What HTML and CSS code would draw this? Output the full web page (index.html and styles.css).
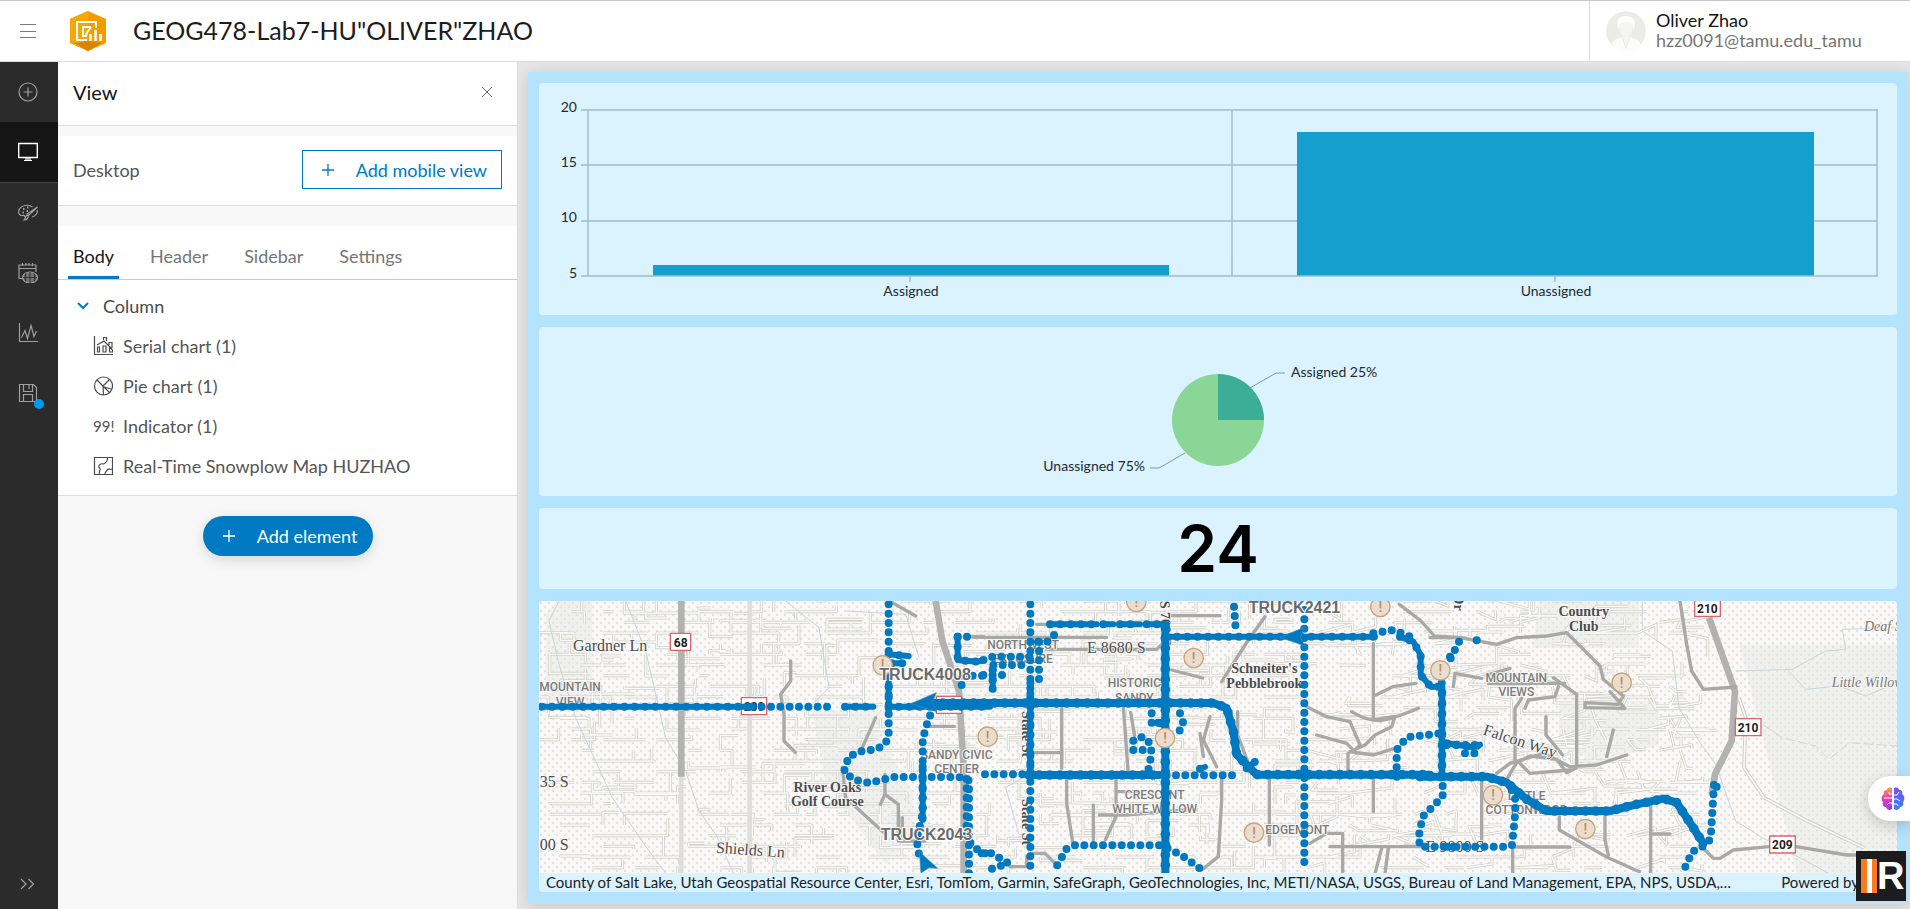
FILE: index.html
```html
<!DOCTYPE html>
<html lang="en">
<head>
<meta charset="utf-8">
<title>GEOG478-Lab7 dashboard</title>
<link rel="stylesheet" href="styles.css">
</head>
<body>
<header class="topbar">
  <button class="menu-btn" aria-label="Menu"><svg width="16" height="16" viewBox="0 0 16 16"><path d="M0 1.500h16M0 8.500h16M0 14.500h16" stroke="#7a7a7a" fill="none"/></svg></button>
  <svg class="app-logo" width="36" height="40" viewBox="0 0 36 40">
    <path d="M18 0 36 8v24L18 40 0 32V8z" fill="#f39c00"/><path d="M18 0 0 8v24l18 8z" fill="#f7a800"/><path d="m18 30 14 2-14 8-14-8z" fill="#dc8400"/>
    <path d="M26 17v-6H7v18h10M21 16h-8v9h3c0-5 3-5 5-9" fill="none" stroke="#fff" stroke-width="2"/><path d="M20.500 23v7M25.500 19v11M30.500 23v7" stroke="#fff" stroke-width="2.500"/>
  </svg>
  <h1 class="title">GEOG478-Lab7-HU"OLIVER"ZHAO</h1>
  <div class="user">
    <svg width="40" height="40" viewBox="0 0 40 40"><defs><clipPath id="av"><circle cx="20" cy="20" r="20"/></clipPath></defs><g clip-path="url(#av)"><circle cx="20" cy="20" r="20" fill="#ebebe9"/><path d="M6 40V32c1-3 6-5 10-6h8c4 1 9 3 10 6v8z" fill="#fbfbfa"/><path d="M12 17C10 8 14 5 20 5s10 3 8 12z" fill="#fff"/><path d="M13 14c2-4 12-4 14 0 0 6-2 11-7 12-5-1-7-6-7-12z" fill="#f5f5f4"/><path d="m16 26 4 11 4-11" fill="#f5f5f4" stroke="#ebebe9"/></g></svg>
    <div class="user-text"><strong>Oliver Zhao</strong><span>hzz0091@tamu.edu_tamu</span></div>
  </div>
</header>
<div class="workspace">
  <nav class="rail" aria-label="Tools">
    <button aria-label="Add"><svg width="20" height="20" viewBox="0 0 20 20"><circle cx="10" cy="10" r="9"/><path d="M10 5.500v9M5.500 10h9"/></svg></button>
    <button class="active" aria-label="View"><svg width="20" height="20" viewBox="0 0 20 20"><path d="M.7 1.500h18.600v14H.7z" stroke-width="1.400"/><path d="M8 16v2.500M12 16v2.500M6 18.500h8M10 16v2"/></svg></button>
    <button aria-label="Theme"><svg width="20" height="20" viewBox="0 0 20 20"><path d="M14.500 4C11 1 3 2 1 7c-1.500 4 1.500 6 3.500 5.500S7 13 6.500 14M14 14c4-1 6-4 5-7"/><path d="m19.500 4-9 8.500-1.500-1.500zM10 12.500c1 2-1 4.500-4 4.500 1.500-1 1-3 2.500-4.500z"/><path d="M5 6h1.500M9 4.500h1.500M4.500 9.500H6M8.500 8H10" stroke-width="1.800"/></svg></button>
    <button aria-label="Time zone"><svg width="20" height="20" viewBox="0 0 20 20"><path d="M4 15.500H1V2h17v7M1 5.500h17M4.500 0v3M8 0v2M11 0v2M14.500 0v3"/><ellipse cx="12" cy="14.500" rx="7.500" ry="5.500" fill="#777"/><path d="M5 14.500h14M12 9v11M8 10.500c-1.500 3-1.500 5 0 8M16 10.500c1.500 3 1.500 5 0 8" stroke="#333"/></svg></button>
    <button aria-label="Performance"><svg width="20" height="20" viewBox="0 0 20 20"><path d="M1.500 0v18.500H20M3.500 14.500l3.500-7 2.500 8 3.500-13 3 11 2.500-5.500"/></svg></button>
    <button class="save" aria-label="Save"><svg width="20" height="20" viewBox="0 0 20 20"><path d="M1.500 1.500h14l3 3v14h-17zM5.500 1.500v7h9v-7M5.500 18.500v-7h9v7M11 2v4"/></svg></button>
    <button class="expand" aria-label="Expand"><svg width="20" height="20" viewBox="0 0 20 20"><path d="m3 5 5 5-5 5M10.500 5l5 5-5 5"/></svg></button>
  </nav>
  <aside class="panel">
    <div class="panel-head"><h2>View</h2><button class="close" aria-label="Close"><svg width="12" height="12" viewBox="0 0 12 12"><path d="m1 1 10 10M11 1 1 11" stroke="#6a6a6a"/></svg></button></div>
    <div class="panel-mode"><span>Desktop</span><button class="mobile-btn"><svg width="12" height="12" viewBox="0 0 12 12"><path d="M6 0v12M0 6h12" stroke="#007ac2" stroke-width="1.300"/></svg>Add mobile view</button></div>
    <div class="tabs" role="tablist"><button role="tab" aria-selected="true" class="sel">Body</button><button role="tab">Header</button><button role="tab">Sidebar</button><button role="tab">Settings</button></div>
    <ul class="tree">
      <li class="parent"><svg width="12" height="12" viewBox="0 0 12 12"><path d="m1 3 5 5 5-5" fill="none" stroke="#007ac2" stroke-width="2"/></svg>Column</li>
      <li><svg width="20" height="20" viewBox="0 0 20 20"><path d="M1.500 0v18.500H20M4.500 16v-5h2v5zM10 16v-6h3v6zM16.500 16v-5l3 3v2zM4 9l7-4 8 8M10.500 4V1.500h3V5M16 9V6.500h3V12"/></svg>Serial chart (1)</li>
      <li><svg width="20" height="20" viewBox="0 0 20 20"><circle cx="10.500" cy="10" r="9"/><path d="m4 4 13 13M16.500 3.500 10 10l.5 9M11 11l7.500 2"/></svg>Pie chart (1)</li>
      <li><span class="nn">99!</span>Indicator (1)</li>
      <li><svg width="20" height="20" viewBox="0 0 20 20"><path d="M1.500 1.500h18v17h-18zM14.500 2c0 3-2 5-4 6-3-1-6 2-4 4 2 1-1 3 0 6M12 18c0-3 2-2 2-4 2-2 3 0 5-1"/></svg>Real-Time Snowplow Map HUZHAO</li>
    </ul>
    <button class="add-btn"><svg width="12" height="12" viewBox="0 0 12 12"><path d="M6 0v12M0 6h12" stroke="#fff" stroke-width="1.300"/></svg>Add element</button>
  </aside>
  <main class="stage">
    <div class="dash">
      <section class="card">
        <svg class="fill chart" viewBox="0 0 1358 232" role="img" aria-label="Serial chart">
          <g fill="#159fcf"><path d="M114 182h516v11H114zM758 49h517v144H758z"/></g>
          <path d="M42 27h1296M42 82h716M1275 82h63M42 138h716M1275 138h63M42 193h1296M49 27v166M693 27v166M1338 26v168M371 193v6M1016 193v6" fill="none" stroke="#a2bccb" stroke-width="1.500"/>
          <g text-anchor="end"><text x="38" y="29">20</text><text x="38" y="84">15</text><text x="38" y="139">10</text><text x="38" y="195">5</text></g>
          <g text-anchor="middle"><text x="372" y="213">Assigned</text><text x="1017" y="213">Unassigned</text></g>
        </svg>
      </section>
      <section class="card">
        <svg class="fill chart" viewBox="0 0 1358 169" role="img" aria-label="Pie chart">
          <circle cx="679" cy="93" r="46" fill="#8ad697"/><path d="M679 93V47a46 46 0 0 1 46 46z" fill="#3cae98"/>
          <path d="m711 61 26-15h9M646 126l-26 15h-9" fill="none" stroke="#86969e"/>
          <text x="752" y="50">Assigned 25%</text><text x="606" y="144" text-anchor="end">Unassigned 75%</text>
        </svg>
      </section>
      <section class="card indicator">24</section>
      <section class="card mapcard">
        <div class="mapview">
        <svg class="fill map" viewBox="0 0 4074 816" preserveAspectRatio="xMidYMid slice" role="img" aria-label="Snowplow map">
          <defs><pattern id="dots" width="24" height="24" patternUnits="userSpaceOnUse"><path d="M3 3h6v6H3zM15 15h6v6h-6z" fill="#e2e2e0"/></pattern></defs>
          <rect width="4074" height="816" fill="#f9f8f7"/>
          <path d="M20 40 60 0h100v300H20zM820 330h240v140l60 100 10 130-90 90-180-240zM3000 0h300v140h-320zM3060 300h300v130l-180 60-120-60zM3600 130h474v686h-300z" fill="#f0f0ee"/>
          <rect width="4074" height="816" fill="url(#dots)"/>
          <g id="streets"></g>
          <g class="creek"><path d="M60 0 30 60l30 130 50 160 110 240 110 160 60 80M260 0l60 150 60 260 60 100 40 120 50 70 60 130M740 0l100 80 30 180-60 60M920 30l180 10 40 130M1500 500l-100 60 40 140M3310 0v90l90 60 20 170 60 100 50 70 60 170 80 50 150 80 90 50M3590 210l170-5 100-55 60-5-10-60 164-5M3740 200l60 65 100-10 80 30 94-40"/><path d="M3640 350l90 60 100 25 40 40 60-50 144 10" stroke-dasharray="30 9"/></g>
          <g class="road soft"><path d="M427 0v816M632 0v816"/></g>
          <g class="road wide"><path d="M427 0v527M1190 0l20 120 50 150 14 230v316M3510 50l78 220-10 150-50 100-10 60"/></g>
          <path d="M3600 290l20 60-5 150 60 90 130 70 170 80" class="casing"/><path d="M3600 290l20 60-5 150 60 90 130 70 170 80" class="lane"/>
          <g class="road">
            <path d="M755 180v60l-30 40 10 60v80l34 34M1010 350l-40 90M910 500l10 90 120 110M1038 520v60l-14 30M1038 580l40 30v110h80M1060 5l70 40M1170 376h76M1275 107h60M1090 650v70"/>
            <g transform="translate(1323 -33)"><path d="M-20 142h400M170 103h380M200 178h330l20-20M575 77h145M575 240l93 24M855 80l-50 70-80 125M245 355v180M155 488h90M430 350l14 190M452 368l12 70M260 560v80l20 130M408 560v120l-32 70M340 645v110M358 675h80l210-18M410 605h60M690 380l-20 70 40 80M660 430l10 70M725 560v70l-10 170-50 40M773 365v70l30 80M868 570v195M980 350l60 30 70 15 30 70-20 20M1010 435l90 25 30 30M1104 490v60M1115 365c80 50 120 20 200-10M1180 160v230l60-10M1245 380l-10 30-50 25-30 30-45 20 70 10 80-25M1188 315l50-25 70-10M1258 43l65 50 40 45 80 5M1180 570v95M1050 770h420M990 760l50-30h48v120M1205 775l-20 75M1225 775l-10 75M155 790h40l30 30M90 830h50v-30"/></g>
            <g transform="translate(2703 -33)"><path d="M-30 143h90l110 20 60-20 90-5 60-10 100 100 10 40 60 50-15 25-100-5v15l120 2-45-50M40 290l5-40 80 15M145 280h230M210 235l-70 20M340 263l70 50v220l-30 15-30-40-80-10-40 20-30 50M170 550l40-30 100-30 80 40 80-5 90-30M240 520l30 30 120-10M355 290l-10 30-80 10-10 25M245 325l-20 30v160M318 380v55l50 60M520 420l-20 80M720 33l20 130 15 80 35 55 98-7M125 570v200M218 770v80M220 771h170M358 680v40l140 80 100 45M495 680v70l10 45M632 640v210M640 732h50M780 765l40 40h20l40-25 160-15 60 10 120 20h80"/></g>
          </g>
          <g class="serif">
            <text x="102" y="151">Gardner Ln</text><text x="2" y="558">35 S</text><text x="2" y="748">00 S</text><text transform="translate(530 755) rotate(4)">Shields Ln</text><text x="1644" y="157">E 8680 S</text><text x="2660" y="754">E 9800 S</text><text transform="translate(2830 400) rotate(18)">Falcon Way</text>
            <g class="bold"><text x="865" y="572" text-anchor="middle">River Oaks</text><text x="865" y="615" text-anchor="middle">Golf Course</text><text x="2176" y="216" text-anchor="middle">Schneiter's</text><text x="2176" y="260" text-anchor="middle">Pebblebrook</text><text x="3134" y="45" text-anchor="middle">Country</text><text x="3134" y="90" text-anchor="middle">Club</text></g>
            <g class="italic"><text x="3975" y="91">Deaf Smith</text><text x="3878" y="258">Little Willow</text></g>
            <g class="bold"><text transform="translate(1448 330) rotate(90)">State St</text><text transform="translate(1448 594) rotate(90)">State St</text><text transform="translate(1864 0) rotate(88)">S 700 E</text><text transform="translate(2744 -20) rotate(90)">Dr</text></g>
          </g>
          <g class="area" text-anchor="middle">
            <text x="93" y="271">MOUNTAIN</text><text x="93" y="314">VIEW</text><text x="1253" y="474">SANDY CIVIC</text><text x="1253" y="516">CENTER</text><text x="1452" y="143">NORTHWEST</text><text x="1452" y="185">EXPOSURE</text><text x="1786" y="259">HISTORIC</text><text x="1786" y="302">SANDY</text><text x="1847" y="593">CRESCENT</text><text x="1847" y="636">WHITE WILLOW</text><text x="2275" y="698">EDGEMONT</text><text x="2932" y="243">MOUNTAIN</text><text x="2932" y="285">VIEWS</text><text x="2963" y="596">LITTLE</text><text x="2963" y="639">COTTONWOOD</text>
          </g>
          <g class="shield" text-anchor="middle">
            <path d="M394 97h61v51h-61zM607 290h76v51h-76zM1192 286h76v51h-76zM3467-5h77v51h-77zM3589 353h77v51h-77zM3692 705h77v51h-77z"/>
            <text x="425" y="137">68</text><text x="645" y="330">209</text><text x="1230" y="326">209</text><text x="3505" y="36">210</text><text x="3627" y="393">210</text><text x="3730" y="745">209</text>
          </g>
          <g class="dotted">
            <path d="M640 317h230"/>
            <g transform="translate(-57 -33)"><path d="M1106 43v150M1106 260v180l-10 20-25 18-50 6-35 16-14 45 30 24 45 10 40-10 30-8h200l30 10v300M1340 567v180l40 40 25 5M1240 350l-22 60-10 40v220l-18 80 8 50M1395 553h160M1313 140h30M1330 257h70M1325 285h20"/></g>
            <g transform="translate(1323 -33)"><path d="M151 43v800M177 155v120M222 135l-20 20h-50M10 210l30-10h110M40 225h110M10 255h60M38 240v80M762 50l6 80M973 60v780M515 370v30h30M600 370l10 30-15 30M460 480v-30l30-10 20 20 5 30-10 50M460 480h50M560 556h220M285 766h260l60 30 70 50M285 766l-25 10-40 70M5 790l30 0 50 30-60 20M1180 130l60-10 50 20M1250 560v-80l30-38 100-12M1388 560v60l-60 60-12 60 4 30h110M1410 200v10"/></g>
            <g transform="translate(2703 -33)"><path d="M110 151l22 15M57 155l-30 60M215 600l12 30-3 60-8 75-8 5H0M822 585l-5 80-5 80-15 20-40 20-30 65M830 590l15 12M20 465h100M75 490h50"/></g>
          </g>
          <g class="solid" id="tracks">
            <path d="M8 317h632"/>
            <g transform="translate(-57 -33)"><path d="M975 350h85M1106 260v100M1106 193l30 3 30 2M1115 220h35M1106 350h304M1313 140v70l60 5 20-5M1208 530v160"/></g>
            <path class="thick" d="M1180 306h843l40 15 20 70 10 70 60 60h520M1470 522h390M1879 80v736"/>
            <g transform="translate(1323 -33)"><path d="M560 140h625M210 103h140M370 103h30M420 103h60M500 103h60M1260 140l40 15 22 40v60l30 35h35v270M38 240v50M660 536l15-5M535 398h20M800 535l25-20M151 280v280"/></g>
            <g transform="translate(2703 -33)"><path d="M5 280v280"/><path class="thick" d="M-60 560h200l60 18 60 50 60 35h190l80-20 80-17 40 12 40 60 40 62"/><path d="M20 460l80 12 20-8"/></g>
          </g>
          <g fill="#0079c1" stroke="#3d91bd" stroke-width="2"><path d="m1115 308 77-33-13 30 15 27zM2223 109l73-30-12 30 14 26zM1141 752l55 50-26-2-24 16z"/></g>
          <g id="warnings" class="warn" text-anchor="middle"></g>
          <g class="truck"><text x="1021" y="236">TRUCK4008</text><text x="1025" y="716">TRUCK2043</text><text x="2129" y="36">TRUCK2421</text></g>
        </svg>
        </div>
        <div class="attribution"><span class="sources">County of Salt Lake, Utah Geospatial Resource Center, Esri, TomTom, Garmin, SafeGraph, GeoTechnologies, Inc, METI/NASA, USGS, Bureau of Land Management, EPA, NPS, USDA,…</span><span class="powered">Powered by</span></div>
      </section>
    </div>
  </main>
</div>
<button class="brain" aria-label="Assistant"><svg width="24" height="24" viewBox="0 0 24 24"><defs><linearGradient id="bl" x2="0" y2="1"><stop stop-color="#ff9b3d"/><stop offset=".5" stop-color="#e43bb5"/><stop offset="1" stop-color="#9438f2"/></linearGradient><linearGradient id="br" x2="0" y2="1"><stop stop-color="#7a4cff"/><stop offset="1" stop-color="#2f86ff"/></linearGradient></defs><path d="M11 1C8 0 6 1 6 3 3 3 2 5 3 7c-3 2-3 6-1 8-1 3 1 5 3 5 1 3 4 4 6 2z" fill="url(#bl)"/><path d="M13 1c3-1 5 0 5 2 3 0 4 2 3 4 3 2 3 6 1 8 1 3-1 5-3 5-1 3-4 4-6 2z" fill="url(#br)"/><path d="M11 7H8V5M3 11h8M11 16H8l-2 2M13 8h3l2-3M13 12h3l3 2M13 17h3l1 2" stroke="#fff" fill="none"/></svg></button>
<div class="badge" aria-hidden="true"><i></i><i></i><i></i><b>R</b></div>
<script src="map.js"></script>
</body>
</html>
```
FILE: styles.css
```css
* { box-sizing: border-box; }
body { margin: 0; height: 100vh; display: flex; flex-direction: column; overflow: hidden; font-family: Lato, "Open Sans", sans-serif; font-size: 18px; line-height: 20px; color: #555; background: #e6e6e6; }
button { font: inherit; color: inherit; background: none; border: 0; padding: 0; margin: 0; cursor: pointer; }
svg { display: block; flex: none; }
.topbar { flex: none; height: 62px; display: flex; align-items: center; background: #fff; border-top: 1px solid #c8c8c8; border-bottom: 1px solid #dcdcdc; }
.menu-btn { width: 56px; height: 60px; display: grid; place-items: center; }
.app-logo { margin-left: 14px; }
.title { flex: 1; margin: 0 0 0 27px; padding-bottom: 2px; font-size: 25px; line-height: 32px; font-weight: 400; color: #1c1c1c; }
.user { align-self: stretch; width: 321px; border-left: 1px solid #dcdcdc; display: flex; align-items: center; gap: 10px; padding-left: 16px; }
.user-text { display: flex; flex-direction: column; padding-bottom: 2px; }
.user-text strong { font-weight: 400; color: #151515; }
.user-text span { color: #757575; }
.workspace { flex: 1; min-height: 0; display: flex; }
.rail { flex: none; width: 58px; background: #2b2b2b; display: flex; flex-direction: column; }
.rail button { height: 60px; padding-right: 2px; display: grid; place-items: center; }
.rail svg { fill: none; stroke: #a0a0a0; stroke-width: 1.2; }
.rail .active { height: 61px; background: #151515; border-bottom: 1px solid #444; }
.rail .active svg { stroke: #fff; }
.rail .save { position: relative; }
.save::after { content: ""; position: absolute; right: 14px; bottom: 14px; width: 10px; height: 10px; border-radius: 50%; background: #009af2; }
.rail .expand { margin-top: auto; height: 50px; }
.panel { flex: none; width: 460px; background: #f8f8f8; border-right: 1px solid #dcdcdc; display: flex; flex-direction: column; }
.panel-head, .panel-mode, .tabs, .tree { background: #fff; border-bottom: 1px solid #dcdcdc; }
.panel-head { height: 64px; padding: 0 24px 4px 15px; display: flex; align-items: center; justify-content: space-between; }
.panel-head h2 { margin: 0; font-size: 20px; line-height: 24px; font-weight: 400; color: #151515; }
.panel-mode { margin-top: 10px; height: 70px; padding: 0 15px 2px; display: flex; align-items: center; justify-content: space-between; }
.mobile-btn { width: 200px; height: 39px; border: 1px solid #007ac2; color: #007ac2; display: flex; align-items: center; justify-content: space-between; padding: 0 14px 0 19px; }
.tabs { margin-top: 20px; height: 54px; display: flex; gap: 26px; padding: 10px 10px 0; border-color: #cacaca; }
.tabs button { padding: 0 5px; color: #757575; border-bottom: 3px solid transparent; }
.tabs .sel { color: #151515; border-color: #007ac2; }
.tree { list-style: none; margin: 0; padding: 6px 0 9px; }
.tree li { height: 40px; padding-left: 35px; display: flex; align-items: center; gap: 10px; }
.tree .parent { padding-left: 19px; gap: 14px; color: #4a4a4a; }
.tree li:not(.parent) svg { fill: none; stroke: #4a4a4a; stroke-width: 1.2; }
.nn { width: 20px; font-size: 15px; }
.add-btn { align-self: center; margin-top: 20px; width: 170px; height: 40px; border-radius: 20px; background: #007ac2; color: #fff; display: flex; align-items: center; justify-content: space-between; padding: 0 15px 0 20px; box-shadow: 0 4px 14px #0002; }
.stage { flex: 1; min-width: 0; padding: 10px 2px 5px 10px; display: flex; }
.dash { flex: 1; min-width: 0; background: #b3e3ff; box-shadow: 0 2px 14px #0002; padding: 11px 11px 12px; display: grid; grid-template-rows: 232fr 169fr 81fr 291fr; gap: 12px; }
.card { min-width: 0; min-height: 0; background: #dbf3ff; border-radius: 4px; overflow: hidden; }
.fill { width: 100%; height: 100%; }
.chart text { font-size: 14px; fill: #1f2a30; }
.indicator { display: grid; place-items: center; font-family: Inter, sans-serif; font-size: 64px; line-height: 76px; font-weight: 600; color: #000; }
.mapcard { display: flex; flex-direction: column; }
.mapview { flex: 1; min-height: 0; }
.attribution { flex: none; height: 19px; display: flex; justify-content: space-between; gap: 12px; padding: 0 38px 0 7px; font-size: 15px; line-height: 18px; color: #222; white-space: nowrap; }
.sources { overflow: hidden; text-overflow: ellipsis; }
.map path { stroke-linejoin: round; }
.casing { fill: none; stroke: #cfcfc8; stroke-width: 11; }
.lane { fill: none; stroke: #f9f9f7; stroke-width: 5; }
#streets .casing { stroke: #d3d3cc; stroke-width: 9; }
#streets .lane { stroke: #fafaf8; stroke-width: 4; }
.creek { fill: none; stroke: #c9d3d8; stroke-width: 3; }
.road { fill: none; stroke: #a8a8a6; stroke-width: 10; stroke-linecap: round; }
.road.soft { stroke: #dededc; stroke-width: 14; }
.road.wide { stroke: #b2b2b0; stroke-width: 20; stroke-linecap: butt; }
.serif { font-family: "Liberation Serif", serif; font-size: 48px; fill: #4c4c4c; paint-order: stroke; stroke: #f9f8f7; stroke-width: 5; }
.serif .bold { font-size: 42px; font-weight: 700; }
.serif .italic { font-style: italic; font-size: 42px; fill: #777; }
.area { font-family: "Liberation Sans Narrow", Roboto, sans-serif; font-size: 36px; font-weight: 500; fill: #7b7b79; paint-order: stroke; stroke: #f9f8f7; stroke-width: 5; }
.shield path { fill: #fff; stroke: #d9646c; stroke-width: 4; }
.shield text { font-family: Roboto, sans-serif; font-weight: 700; font-size: 36px; fill: #222; }
.warn circle { fill: #e9ddd0; stroke: #cda178; stroke-width: 4; }
.warn text { font-family: Roboto, sans-serif; font-size: 42px; font-weight: 500; fill: #c08b59; }
.dotted, .solid { fill: none; stroke: #0079c1; stroke-linecap: round; }
.dotted { stroke-width: 24; stroke-dasharray: 0 28; }
.solid { stroke-width: 18; }
.solid .thick { stroke-width: 24; }
.solid .beads { stroke-width: 24; stroke-dasharray: 0 31; }
.solid .thick.beads { stroke-width: 29; }
.truck { font-family: "Liberation Sans", Arial, sans-serif; font-weight: 700; font-size: 48px; fill: #6b6b6b; paint-order: stroke; stroke: #fff; stroke-width: 6; }
.brain { position: absolute; right: 0; top: 776px; width: 42px; height: 45px; background: #fff; border-radius: 22px 0 0 22px; display: grid; place-items: center; padding-left: 8px; box-shadow: 0 4px 16px #0003; }
.badge { position: absolute; right: 4px; bottom: 8px; width: 50px; height: 50px; background: #1c1c1c; display: flex; align-items: center; padding-left: 5px; overflow: hidden; }
.badge i { width: 6px; height: 34px; background: #ff7a1c; }
.badge i:nth-child(2) { width: 5px; background: #fff; }
.badge i:nth-child(3) { width: 5px; }
.badge b { font: 700 38px/50px "Liberation Sans", Arial, sans-serif; color: #fff; }
```
FILE: map.js
```js
const NS = 'http://www.w3.org/2000/svg';
function el(parent, tag, attrs) {
  const node = document.createElementNS(NS, tag);
  for (const key in attrs) node.setAttribute(key, attrs[key]);
  parent.appendChild(node);
  return node;
}

// Local street grid, seeded so that it is the same on every load.
let seed = 41;
function rnd() {
  seed = (seed * 16807) % 2147483647;
  return seed / 2147483647;
}
let streets = '';
for (let i = 0; i < 900; i++) {
  const x = Math.round(rnd() * 3440 / 32) * 32;
  const y = Math.round(rnd() * 816 / 32) * 32;
  const a = Math.round(20 + rnd() * 110);
  const b = Math.round((rnd() - 0.5) * 130);
  const slant = x > 2300 ? Math.round((rnd() - 0.5) * 60) : 0;
  const kind = rnd();
  if (kind < 0.4) streets += `M${x} ${y}l${a} ${slant}v${b}`;
  else if (kind < 0.7) streets += `M${x} ${y}l${slant} ${b}h${a}`;
  else streets += `M${x} ${y}h${a}`;
}
const group = document.getElementById('streets');
el(group, 'path', { d: streets, class: 'casing' });
el(group, 'path', { d: streets, class: 'lane' });

// Dense tracks are closely spaced position fixes: a line with beads on it.
for (const path of document.querySelectorAll('#tracks path')) {
  const beads = path.cloneNode();
  beads.classList.add('beads');
  path.after(beads);
}

// Traffic incident markers.
const spots = [[1031, 193], [1346, 407], [1792, 3], [2524, 18], [1964, 171], [1878, 411], [2704, 208], [2145, 695], [3248, 245], [2862, 583], [3139, 684]];
const warnings = document.getElementById('warnings');
for (const [x, y] of spots) {
  el(warnings, 'circle', { cx: x, cy: y, r: 29 });
  el(warnings, 'text', { x: x, y: y + 15 }).textContent = '!';
}
```
